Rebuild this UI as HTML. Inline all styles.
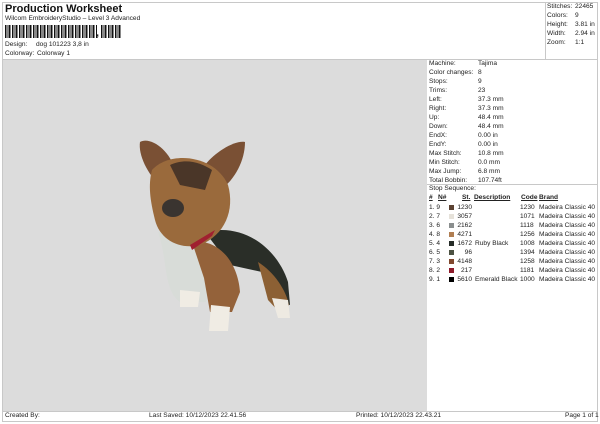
<!DOCTYPE html>
<html><head><meta charset="utf-8"><style>
*{margin:0;padding:0;box-sizing:border-box}
body{width:600px;height:424px;background:#fff;position:relative;overflow:hidden;font-family:"Liberation Sans",sans-serif;font-size:6.6px;color:#222}
.a{position:absolute;white-space:nowrap;line-height:8px}
.l{position:absolute;background:#c8c8c8}
.sw{position:absolute;width:5px;height:5px;left:449px}
</style></head><body>
<div class="l" style="left:2px;top:2px;width:596px;height:1px"></div>
<div class="l" style="left:2px;top:2px;width:1px;height:420px"></div>
<div class="l" style="left:597px;top:2px;width:1px;height:420px"></div>
<div class="l" style="left:2px;top:421px;width:596px;height:1px"></div>
<div class="l" style="left:545px;top:2px;width:1px;height:57px"></div>
<div class="l" style="left:2px;top:59px;width:596px;height:1px"></div>
<div class="l" style="left:2px;top:411px;width:596px;height:1px"></div>
<div style="position:absolute;left:3px;top:60px;width:424px;height:351px;background:#dcdcdc"></div>
<div class="l" style="left:427px;top:184px;width:170px;height:1px"></div>

<div class="a" style="left:5px;top:3px;font-size:11px;font-weight:bold;line-height:13px;color:#111">Production Worksheet</div>
<div class="a" style="left:5px;top:15px">Wilcom EmbroideryStudio – Level 3 Advanced</div>
<div style="position:absolute;left:5px;top:25px;width:92px;height:13px;background:repeating-linear-gradient(90deg,#111 0 1.3px,#fff 1.3px 2px,#111 2px 2.6px,#fff 2.6px 3.5px)"></div>
<div class="a" style="left:96px;top:29px;font-size:11px;font-weight:bold">,</div>
<div style="position:absolute;left:101px;top:25px;width:20px;height:13px;background:repeating-linear-gradient(90deg,#111 0 1.3px,#fff 1.3px 2px,#111 2px 2.6px,#fff 2.6px 3.5px)"></div>
<div class="a" style="left:5px;top:41px">Design:</div><div class="a" style="left:36px;top:41px">dog 101223 3,8 in</div>
<div class="a" style="left:5px;top:50px">Colorway:</div><div class="a" style="left:37px;top:50px">Colorway 1</div>

<div class="a" style="left:547px;top:3px">Stitches:</div><div class="a" style="left:575px;top:3px">22465</div>
<div class="a" style="left:547px;top:12px">Colors:</div><div class="a" style="left:575px;top:12px">9</div>
<div class="a" style="left:547px;top:21px">Height:</div><div class="a" style="left:575px;top:21px">3.81 in</div>
<div class="a" style="left:547px;top:30px">Width:</div><div class="a" style="left:575px;top:30px">2.94 in</div>
<div class="a" style="left:547px;top:39px">Zoom:</div><div class="a" style="left:575px;top:39px">1:1</div>

<div class="a" style="left:429px;top:59px;line-height:9px">Machine:<br>Color changes:<br>Stops:<br>Trims:<br>Left:<br>Right:<br>Up:<br>Down:<br>EndX:<br>EndY:<br>Max Stitch:<br>Min Stitch:<br>Max Jump:<br>Total Bobbin:</div>
<div class="a" style="left:478px;top:59px;line-height:9px">Tajima<br>8<br>9<br>23<br>37.3 mm<br>37.3 mm<br>48.4 mm<br>48.4 mm<br>0.00 in<br>0.00 in<br>10.8 mm<br>0.0 mm<br>6.8 mm<br>107.74ft</div>
<div class="a" style="left:429px;top:185px">Stop Sequence:</div>
<div class="a" style="left:429px;top:194px;font-weight:bold;text-decoration:underline">#</div>
<div class="a" style="left:438px;top:194px;font-weight:bold;text-decoration:underline">N#</div>
<div class="a" style="left:462px;top:194px;font-weight:bold;text-decoration:underline">St.</div>
<div class="a" style="left:474px;top:194px;font-weight:bold;text-decoration:underline">Description</div>
<div class="a" style="left:521px;top:194px;font-weight:bold;text-decoration:underline">Code</div>
<div class="a" style="left:539px;top:194px;font-weight:bold;text-decoration:underline">Brand</div>
<div class="a" style="left:429px;top:203px;line-height:9px">1. 9<br>2. 7<br>3. 6<br>4. 8<br>5. 4<br>6. 5<br>7. 3<br>8. 2<br>9. 1</div>
<div class="a" style="left:456px;top:203px;line-height:9px;text-align:right;width:16px">1230<br>3057<br>2162<br>4271<br>1672<br>96<br>4148<br>217<br>5610</div>
<div class="a" style="left:475px;top:203px;line-height:9px">&nbsp;<br>&nbsp;<br>&nbsp;<br>&nbsp;<br>Ruby Black<br>&nbsp;<br>&nbsp;<br>&nbsp;<br>Emerald Black</div>
<div class="a" style="left:520px;top:203px;line-height:9px">1230<br>1071<br>1118<br>1256<br>1008<br>1394<br>1258<br>1181<br>1000</div>
<div class="a" style="left:539px;top:203px;line-height:9px">Madeira Classic 40<br>Madeira Classic 40<br>Madeira Classic 40<br>Madeira Classic 40<br>Madeira Classic 40<br>Madeira Classic 40<br>Madeira Classic 40<br>Madeira Classic 40<br>Madeira Classic 40</div>
<div class="sw" style="top:205px;background:#5c4232"></div>
<div class="sw" style="top:214px;background:#e6e2da"></div>
<div class="sw" style="top:223px;background:#8a8e8e"></div>
<div class="sw" style="top:232px;background:#b07e52"></div>
<div class="sw" style="top:241px;background:#262c28"></div>
<div class="sw" style="top:250px;background:#4c5242"></div>
<div class="sw" style="top:259px;background:#80482e"></div>
<div class="sw" style="top:268px;background:#8e1a2a"></div>
<div class="sw" style="top:277px;background:#000"></div>

<div class="a" style="left:5px;top:412px">Created By:</div>
<div class="a" style="left:149px;top:412px">Last Saved: 10/12/2023 22.41.56</div>
<div class="a" style="left:356px;top:412px">Printed: 10/12/2023 22.43.21</div>
<div class="a" style="left:565px;top:412px">Page 1 of 1</div>

<svg style="position:absolute;left:0;top:0" width="600" height="424">
<path d="M205,232 C245,222 278,250 288,282 L290,305 L270,300 L262,272 L230,265 Z" fill="#2a2e28"/>
<path d="M258,262 C274,272 286,290 289,305 L282,315 L268,300 Z" fill="#8c6034"/>
<path d="M272,298 L288,300 L290,318 L278,318 Z" fill="#eeeae2"/>
<path d="M158,232 C168,260 163,290 180,302 L206,302 L212,258 L202,230 Z" fill="#d8dcd8"/>
<path d="M192,242 C218,238 238,262 240,292 L232,312 L210,312 L204,278 Z" fill="#94623a"/>
<path d="M180,290 L200,292 L198,307 L180,307 Z" fill="#f0ece4"/>
<path d="M211,305 L230,307 L228,331 L209,331 Z" fill="#f0ece4"/>
<path d="M140,142 C150,136 170,150 175,170 L160,185 C148,175 138,155 140,142 Z" fill="#7a5034"/>
<path d="M245,142 C235,140 215,152 205,165 L220,190 C235,180 245,160 245,142 Z" fill="#7a5034"/>
<path d="M152,170 C170,150 215,155 228,185 C235,210 225,235 200,245 C180,250 160,240 155,220 C150,200 148,185 152,170 Z" fill="#9a6a3c"/>
<path d="M170,165 C185,158 200,162 212,170 L205,190 L180,185 Z" fill="#4a3628"/>
<ellipse cx="173" cy="208" rx="11" ry="9" fill="#3a3430"/>
<path d="M190,245 L215,230 L212,236 L192,250 Z" fill="#a02030"/>
</svg>
</body></html>
